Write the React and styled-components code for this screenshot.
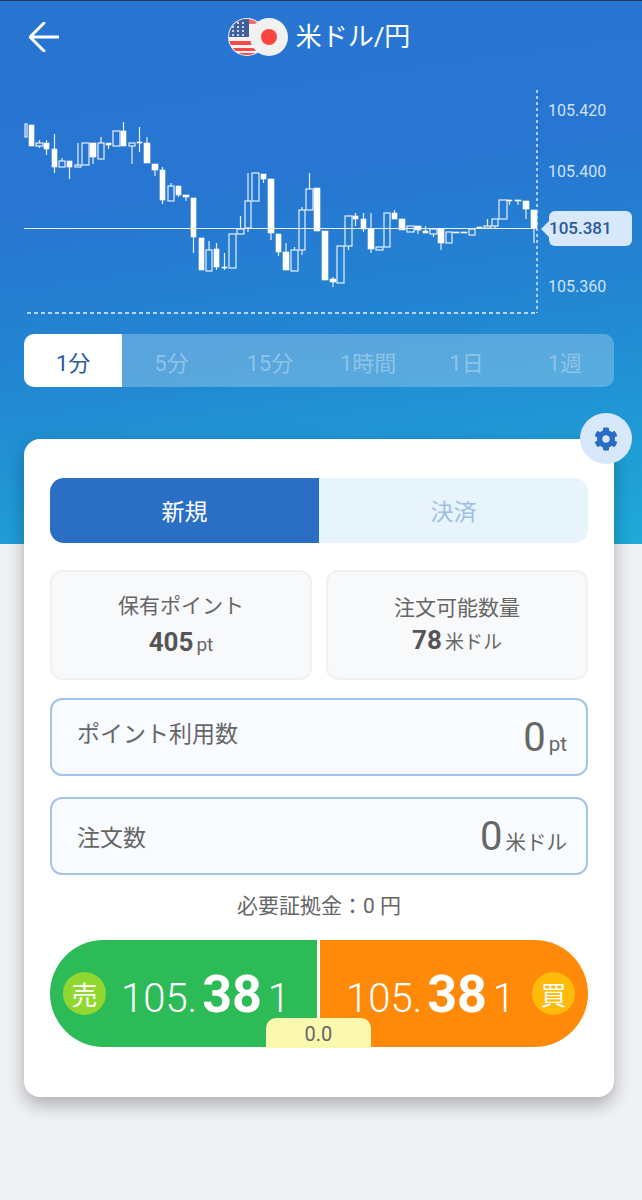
import React from 'react';
import styled, {createGlobalStyle} from 'styled-components';
import {FaCog} from 'react-icons/fa';

const GlobalStyle = createGlobalStyle`
    html, body {
        margin: 0;
        padding: 0;
        background: #eff1f4;
        font-family: Roboto, "Noto Sans CJK JP", sans-serif;
    }
    * {
        box-sizing: border-box;
    }
`;

const Page = styled.div`
    width: 642px;
    min-height: 1200px;
    background: #eff1f4;
`;

// Blue part behind the chart
const Hero = styled.div`
    height: 544px;
    border-top: 1px solid #17375f;
    background: linear-gradient(172deg, #2875d1 0%, #2776d1 35%, #2288d2 62%, #1eaad8 100%);
`;

const Header = styled.div`
    height: 72px;
    padding: 0 33px 0 29px;
    display: grid;
    grid-template-columns: 1fr auto 1fr;
    align-items: center;
`;

const BackButton = styled.svg`
    width: 30px;
    height: 30px;
    display: block;
`;

const TitleGroup = styled.div`
    display: flex;
    align-items: center;
    gap: 8px;
`;

const Title = styled.div`
    color: #fff;
    font-size: 26px;
    line-height: 36px;
`;

const ChartWrap = styled.div`
    position: relative;
    height: 226px;
    margin-top: 17px;
`;

const ChartSvg = styled.svg`
    display: block;
    width: 642px;
    height: 226px;
`;

const PriceTag = styled.div`
    position: absolute;
    left: 549px;
    top: 121px;
    width: 83px;
    height: 35px;
    border-radius: 6px;
    background: #d6e8f9;
    color: #2a5a9c;
    font-size: 17px;
    font-weight: 500;
    line-height: 35px;

    &::before {
        content: '';
        position: absolute;
        left: -8px;
        top: 10px;
        border-style: solid;
        border-width: 8px 8px 8px 0;
        border-color: transparent #d6e8f9 transparent transparent;
    }
`;

const Tabs = styled.div`
    display: grid;
    grid-template-columns: repeat(6, 1fr);
    height: 53px;
    margin: 18px 28px 0 24px;
    border-radius: 10px;
    overflow: hidden;
    background: rgba(255, 255, 255, .25);
`;

const Tab = styled.div`
    display: flex;
    align-items: center;
    justify-content: center;
    font-size: 22px;
    background: ${p => p.$active ? '#fff' : 'transparent'};
    color: ${p => p.$active ? '#2a5a9c' : '#8fc4e8'};
`;

// White panel, pulled up over the hero
const Card = styled.div`
    position: relative;
    width: 590px;
    height: 658px;
    margin: -105px 0 0 24px;
    padding: 39px 26px 0;
    border-radius: 16px;
    background: #fff;
    box-shadow: 0 8px 18px rgba(0, 0, 0, .28);
`;

const GearButton = styled.div`
    position: absolute;
    right: -18px;
    top: -26px;
    width: 52px;
    height: 51px;
    padding-top: 1px;
    border-radius: 50%;
    background: #d6e8f9;
    color: #2a6cc4;
    font-size: 24px;
    display: flex;
    align-items: center;
    justify-content: center;
`;

const Segment = styled.div`
    display: grid;
    grid-template-columns: 269px 269px;
    height: 65px;
    border-radius: 14px;
    overflow: hidden;
`;

const SegmentItem = styled.div`
    display: flex;
    align-items: center;
    justify-content: center;
    padding-bottom: 2px;
    font-size: 23px;
    background: ${p => p.$active ? '#2b6fc4' : '#e8f4fc'};
    color: ${p => p.$active ? '#fff' : '#9dc0e4'};
`;

const Stats = styled.div`
    display: grid;
    grid-template-columns: 262px 262px;
    gap: 14px;
    margin-top: 27px;
`;

const StatBox = styled.div`
    height: 110px;
    display: flex;
    flex-direction: column;
    align-items: center;
    justify-content: center;
    gap: ${p => p.$gap}px;
    border: 2px solid #f0f1f3;
    border-radius: 12px;
    background: #f8f9fb;
    color: #666;
`;

const StatLabel = styled.div`
    font-size: 21px;
    line-height: 28px;
`;

const StatValue = styled.div`
    display: flex;
    align-items: baseline;
    gap: 3px;
    line-height: 28px;
    font-size: 19px;

    b {
        font-size: 26px;
        font-weight: 700;
        color: #555;
    }
`;

const Field = styled.div`
    height: 78px;
    margin-top: ${p => p.$top}px;
    padding: 0 19px 0 25px;
    display: flex;
    align-items: center;
    justify-content: space-between;
    border: 2px solid #a3c4e6;
    border-radius: 12px;
    background: #f8fbff;
    color: #666;
`;

const FieldLabel = styled.div`
    font-size: 23px;
    padding-bottom: ${p => p.$lift}px;
`;

const FieldValue = styled.div`
    display: flex;
    align-items: baseline;
    gap: 3px;
    font-size: 20.5px;

    b {
        font-size: 40px;
        font-weight: 400;
        color: #666;
    }
`;

const MarginText = styled.div`
    margin-top: 16px;
    height: 30px;
    line-height: 30px;
    text-align: center;
    font-size: 21px;
    color: #666;
`;

const TradeBar = styled.div`
    position: relative;
    display: grid;
    grid-template-columns: 267px 3px 268px;
    height: 107px;
    margin-top: 19px;
`;

const TradeDivider = styled.div`
    background: #fff;
`;

const TradeSide = styled.div`
    display: flex;
    align-items: center;
    justify-content: ${p => p.$buy ? 'flex-end' : 'flex-start'};
    gap: ${p => p.$buy ? 17 : 15}px;
    padding: ${p => p.$buy ? '0 13px 0 0' : '0 0 0 13px'};
    border-radius: ${p => p.$buy ? '0 54px 54px 0' : '54px 0 0 54px'};
    background: ${p => p.$buy ? '#ff8908' : '#2dbb57'};
`;

const SideBadge = styled.div`
    width: 43px;
    height: 43px;
    border-radius: 50%;
    display: flex;
    align-items: center;
    justify-content: center;
    font-size: 26px;
    color: #fff;
    background: ${p => p.$buy ? '#ffba0a' : '#90d82f'};
`;

const Price = styled.div`
    color: #fff;
    font-size: 40px;
    font-weight: 300;
    line-height: 60px;
    padding-top: 6px;

    b {
        margin: 0 6px 0 5px;
        font-size: 52px;
        font-weight: 700;
    }
`;

const SpreadTab = styled.div`
    position: absolute;
    left: 216px;
    bottom: -1px;
    width: 105px;
    height: 30px;
    border-radius: 10px 10px 0 0;
    background: #fbf9b0;
    color: #666;
    font-size: 20px;
    line-height: 32px;
    text-align: center;
`;

// [left, right, body top, body bottom, wick top, wick bottom, filled]
const candles = [
    [25, 27, 124, 137, 124, 137, 0],
    [29, 34, 125, 146, 125, 146, 1],
    [36, 43, 143, 146, 140, 148, 0],
    [44, 49, 143, 149, 140, 155, 1],
    [52, 57, 149, 167, 134, 173, 1],
    [59, 65, 161, 167, 158, 167, 0],
    [67, 72, 161, 167, 161, 179, 1],
    [75, 81, 165, 167, 143, 167, 0],
    [82, 89, 143, 165, 143, 165, 0],
    [90, 96, 143, 157, 143, 164, 1],
    [98, 104, 143, 159, 137, 159, 0],
    [106, 111, 143, 145, 143, 149, 1],
    [113, 120, 131, 146, 131, 146, 0],
    [121, 126, 131, 146, 122, 146, 1],
    [129, 135, 143, 146, 143, 164, 0],
    [137, 142, 142, 143, 127, 152, 1],
    [144, 150, 143, 163, 137, 163, 1],
    [152, 158, 164, 170, 164, 176, 1],
    [160, 165, 170, 200, 167, 204, 1],
    [168, 174, 186, 201, 183, 201, 0],
    [176, 181, 186, 195, 186, 197, 1],
    [183, 189, 195, 197, 195, 201, 1],
    [191, 196, 198, 237, 198, 253, 1],
    [199, 204, 238, 270, 238, 270, 1],
    [206, 212, 250, 271, 241, 271, 0],
    [214, 219, 249, 267, 243, 270, 1],
    [222, 227, 267, 268, 253, 270, 1],
    [229, 236, 234, 268, 234, 268, 0],
    [237, 244, 229, 234, 216, 234, 0],
    [245, 251, 201, 228, 173, 232, 0],
    [252, 259, 173, 201, 173, 201, 0],
    [261, 266, 174, 179, 174, 183, 1],
    [268, 274, 179, 233, 179, 240, 1],
    [276, 281, 234, 252, 234, 256, 1],
    [283, 289, 252, 270, 243, 270, 1],
    [291, 298, 250, 271, 247, 271, 0],
    [299, 305, 210, 250, 207, 255, 0],
    [306, 313, 189, 210, 173, 210, 0],
    [314, 320, 188, 231, 188, 231, 1],
    [322, 328, 231, 280, 231, 280, 1],
    [330, 336, 279, 282, 277, 287, 1],
    [337, 344, 246, 283, 246, 283, 0],
    [345, 352, 216, 246, 216, 250, 0],
    [353, 358, 216, 219, 213, 226, 1],
    [361, 366, 219, 229, 213, 232, 1],
    [368, 374, 229, 249, 213, 253, 1],
    [376, 383, 247, 250, 247, 250, 0],
    [384, 390, 213, 247, 213, 247, 0],
    [392, 397, 213, 219, 210, 219, 1],
    [399, 405, 219, 230, 219, 230, 1],
    [407, 414, 226, 232, 226, 232, 0],
    [415, 421, 226, 230, 226, 234, 1],
    [423, 428, 231, 233, 226, 233, 1],
    [430, 437, 229, 234, 229, 237, 0],
    [438, 444, 229, 243, 229, 250, 1],
    [446, 452, 232, 243, 232, 243, 0],
    [453, 459, 232, 233, 232, 233, 1],
    [461, 467, 232, 233, 232, 233, 1],
    [469, 475, 229, 235, 229, 235, 0],
    [477, 482, 227, 228, 227, 228, 1],
    [484, 491, 226, 228, 219, 228, 0],
    [492, 498, 219, 226, 219, 228, 0],
    [499, 507, 200, 219, 200, 219, 0],
    [507, 512, 200, 201, 200, 205, 1],
    [515, 521, 200, 201, 200, 205, 1],
    [523, 529, 201, 209, 201, 219, 1],
    [531, 537, 210, 228, 210, 243, 1],
];

const axisLabels = [
    {text: '105.420', y: 110},
    {text: '105.400', y: 171},
    {text: '105.360', y: 286},
];

// The wick stops at the body, so hollow candles stay empty inside
function Candle({c}) {
    const [left, right, top, bottom, wickTop, wickBottom, filled] = c;
    const mid = (left + right) / 2;
    return (
        <g>
            <line x1={mid} x2={mid} y1={wickTop} y2={top} stroke="#e6f0fb" strokeWidth="1.2"/>
            <line x1={mid} x2={mid} y1={bottom} y2={wickBottom} stroke="#e6f0fb" strokeWidth="1.2"/>
            <rect
                x={left}
                y={top}
                width={right - left}
                height={bottom - top}
                fill={filled ? '#fff' : 'none'}
                stroke={filled ? '#fff' : '#e6f0fb'}
                strokeWidth={filled ? 0.6 : 1.2}
            />
        </g>
    );
}

function CandleChart() {
    return (
        <ChartSvg viewBox="0 90 642 226">
            {candles.map(c => <Candle key={c[0]} c={c}/>)}
            <line x1="24" x2="537" y1="228.5" y2="228.5" stroke="#e6f0fb" strokeWidth="1.2"/>
            <line x1="537" x2="537" y1="90" y2="313" stroke="#e6f0fb" strokeWidth="1.4" strokeDasharray="3 3"/>
            <line x1="27" x2="537" y1="313" y2="313" stroke="#e6f0fb" strokeWidth="1.4" strokeDasharray="4 3"/>
            {axisLabels.map(label => (
                <text
                    key={label.text}
                    x="548"
                    y={label.y}
                    dominantBaseline="central"
                    fill="#cfe2f5"
                    fontFamily="Roboto, sans-serif"
                    fontSize="16">
                    {label.text}
                </text>
            ))}
        </ChartSvg>
    );
}

function PairFlags() {
    return (
        <svg width="60" height="40" viewBox="0 0 60 40">
            <defs>
                <clipPath id="usClip">
                    <circle cx="19" cy="20" r="18"/>
                </clipPath>
            </defs>
            <circle cx="19" cy="20" r="19" fill="#f4f4f4"/>
            <g clipPath="url(#usClip)">
                <rect x="0" y="24" width="40" height="4" fill="#f9474a"/>
                <rect x="0" y="31" width="40" height="3" fill="#f9474a"/>
                <rect x="0" y="36" width="40" height="4" fill="#f9474a"/>
                <rect x="0" y="0" width="40" height="7" fill="#f9474a" opacity=".8"/>
                <rect x="0" y="0" width="21" height="20" fill="#3f5f9e"/>
                {[6, 10, 14, 18].map(y => [5, 10, 15].map(x => (
                    <circle key={`${x}-${y}`} cx={x} cy={y} r="1" fill="#fff"/>
                )))}
            </g>
            <circle cx="41" cy="20" r="19" fill="#f1f1f1"/>
            <circle cx="41" cy="20" r="8" fill="#fb4540"/>
        </svg>
    );
}

function TradeButton({side, buy}) {
    const price = <Price>105.<b>38</b>1</Price>;
    const badge = <SideBadge $buy={buy}>{side}</SideBadge>;
    return (
        <TradeSide $buy={buy}>
            {buy ? price : badge}
            {buy ? badge : price}
        </TradeSide>
    );
}

export default function App() {
    const tabs = ['1分', '5分', '15分', '1時間', '1日', '1週'];

    return (
        <Page>
            <GlobalStyle/>
            <Hero>
                <Header>
                    <BackButton viewBox="0 0 30 30">
                        <path
                            d="M1 15 H29 M15 1 L1 15 L15 29"
                            fill="none"
                            stroke="#fff"
                            strokeWidth="3"
                            strokeLinecap="round"
                            strokeLinejoin="round"
                        />
                    </BackButton>
                    <TitleGroup>
                        <PairFlags/>
                        <Title>米ドル/円</Title>
                    </TitleGroup>
                </Header>
                <ChartWrap>
                    <CandleChart/>
                    <PriceTag>105.381</PriceTag>
                </ChartWrap>
                <Tabs>
                    {tabs.map((tab, i) => <Tab key={tab} $active={i === 0}>{tab}</Tab>)}
                </Tabs>
            </Hero>
            <Card>
                <GearButton><FaCog/></GearButton>
                <Segment>
                    <SegmentItem $active>新規</SegmentItem>
                    <SegmentItem>決済</SegmentItem>
                </Segment>
                <Stats>
                    <StatBox $gap={8}>
                        <StatLabel>保有ポイント</StatLabel>
                        <StatValue><b>405</b>pt</StatValue>
                    </StatBox>
                    <StatBox $gap={4}>
                        <StatLabel>注文可能数量</StatLabel>
                        <StatValue><b>78</b>米ドル</StatValue>
                    </StatBox>
                </Stats>
                <Field $top={18}>
                    <FieldLabel $lift={10}>ポイント利用数</FieldLabel>
                    <FieldValue><b>0</b>pt</FieldValue>
                </Field>
                <Field $top={21}>
                    <FieldLabel $lift={0}>注文数</FieldLabel>
                    <FieldValue><b>0</b>米ドル</FieldValue>
                </Field>
                <MarginText>必要証拠金：0 円</MarginText>
                <TradeBar>
                    <TradeButton side="売"/>
                    <TradeDivider/>
                    <TradeButton side="買" buy/>
                    <SpreadTab>0.0</SpreadTab>
                </TradeBar>
            </Card>
        </Page>
    );
}
